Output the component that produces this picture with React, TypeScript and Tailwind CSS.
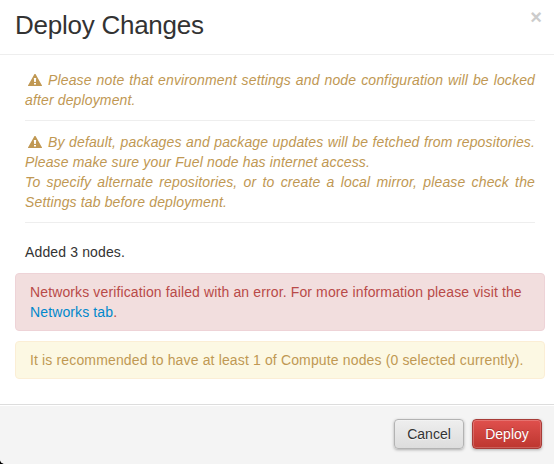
import React from 'react';

function WarningIcon() {
  return (
    <svg className="ml-[3px] mr-[6px] inline-block h-3 w-[14px] align-[-1px]" viewBox="0 0 14 12">
      <path
        fill="#c09853"
        fillRule="evenodd"
        d="M6.5 0h1L14 11.5V12H0v-.5ZM5.8 4l.4 4h1.6l.4-4ZM6 9v1.6h2V9Z"
      />
    </svg>
  );
}

function Divider() {
  return <hr className="border-0 border-t border-[#eeeeee]" />;
}

export default function App() {
  return (
    <div className="h-[464px] w-[554px] overflow-hidden bg-black">
      <div className="flex h-full flex-col overflow-hidden rounded-bl-[5px] bg-white text-[14px] leading-5 text-[#333333] [font-family:'Liberation_Sans',Arial,sans-serif]">
        <header className="flex h-[55px] shrink-0 items-start justify-between border-b border-[#eeeeee] pl-[15px] pr-3">
          <h3 className="mt-[5px] text-[26px] leading-10 tracking-[-0.25px]">Deploy Changes</h3>
          <button className="mt-[7px] text-[20px] font-bold leading-5 text-[#cccccc]">×</button>
        </header>

        <main className="flex flex-1 flex-col pl-[15px] pr-[9px] pt-[15px] tracking-[0.14px]">
          <div className="flex flex-col px-[10px]">
            <p className="mb-[10px] text-justify italic text-[#c09853]">
              <WarningIcon />
              Please note that environment settings and node configuration will be locked after deployment.
            </p>
            <Divider />
            <p className="mb-[10px] mt-[11px] text-justify italic text-[#c09853]">
              <WarningIcon />
              By default, packages and package updates will be fetched from repositories. Please make sure your Fuel node has internet access.
              <br />
              To specify alternate repositories, or to create a local mirror, please check the Settings tab before deployment.
            </p>
            <Divider />
            <p className="mb-[11px] mt-[19px]">Added 3 nodes.</p>
          </div>
          <div className="mb-[10px] rounded-[4px] border border-[#eed3d7] bg-[#f2dede] px-[14px] py-2 tracking-[0.125px] text-[#b94a48]">
            Networks verification failed with an error. For more information please visit the{' '}
            <a className="text-[#0088cc]">Networks tab</a>.
          </div>
          <div className="rounded-[4px] border border-[#fbeed5] bg-[#fcf8e3] px-[14px] py-2 tracking-[0.145px] text-[#c09853]">
            It is recommended to have at least 1 of Compute nodes (0 selected currently).
          </div>
        </main>

        <footer className="flex h-[60px] shrink-0 items-start justify-end gap-2 border-t border-[#dddddd] bg-[#f4f4f4] pr-3 pt-[14px] shadow-[inset_0_1px_0_#ffffff]">
          <button className="h-[30px] w-[70px] rounded-[4px] border border-[#b3b3b3] bg-linear-to-b from-[#eeeeee] to-[#dddddd] text-[#333333] shadow-[inset_0_1px_0_rgba(255,255,255,0.3),0_1px_3px_rgba(0,0,0,0.3)] [text-shadow:0_1px_1px_rgba(255,255,255,0.75)]">
            Cancel
          </button>
          <button className="h-[30px] w-[70px] rounded-[4px] border border-[#a73c38] bg-linear-to-b from-[#e0504d] to-[#bd362f] text-white shadow-[inset_0_0_0_1px_rgba(255,255,255,0.2),0_1px_3px_rgba(0,0,0,0.3)] [text-shadow:0_-1px_0_rgba(0,0,0,0.25)]">
            Deploy
          </button>
        </footer>
      </div>
    </div>
  );
}
